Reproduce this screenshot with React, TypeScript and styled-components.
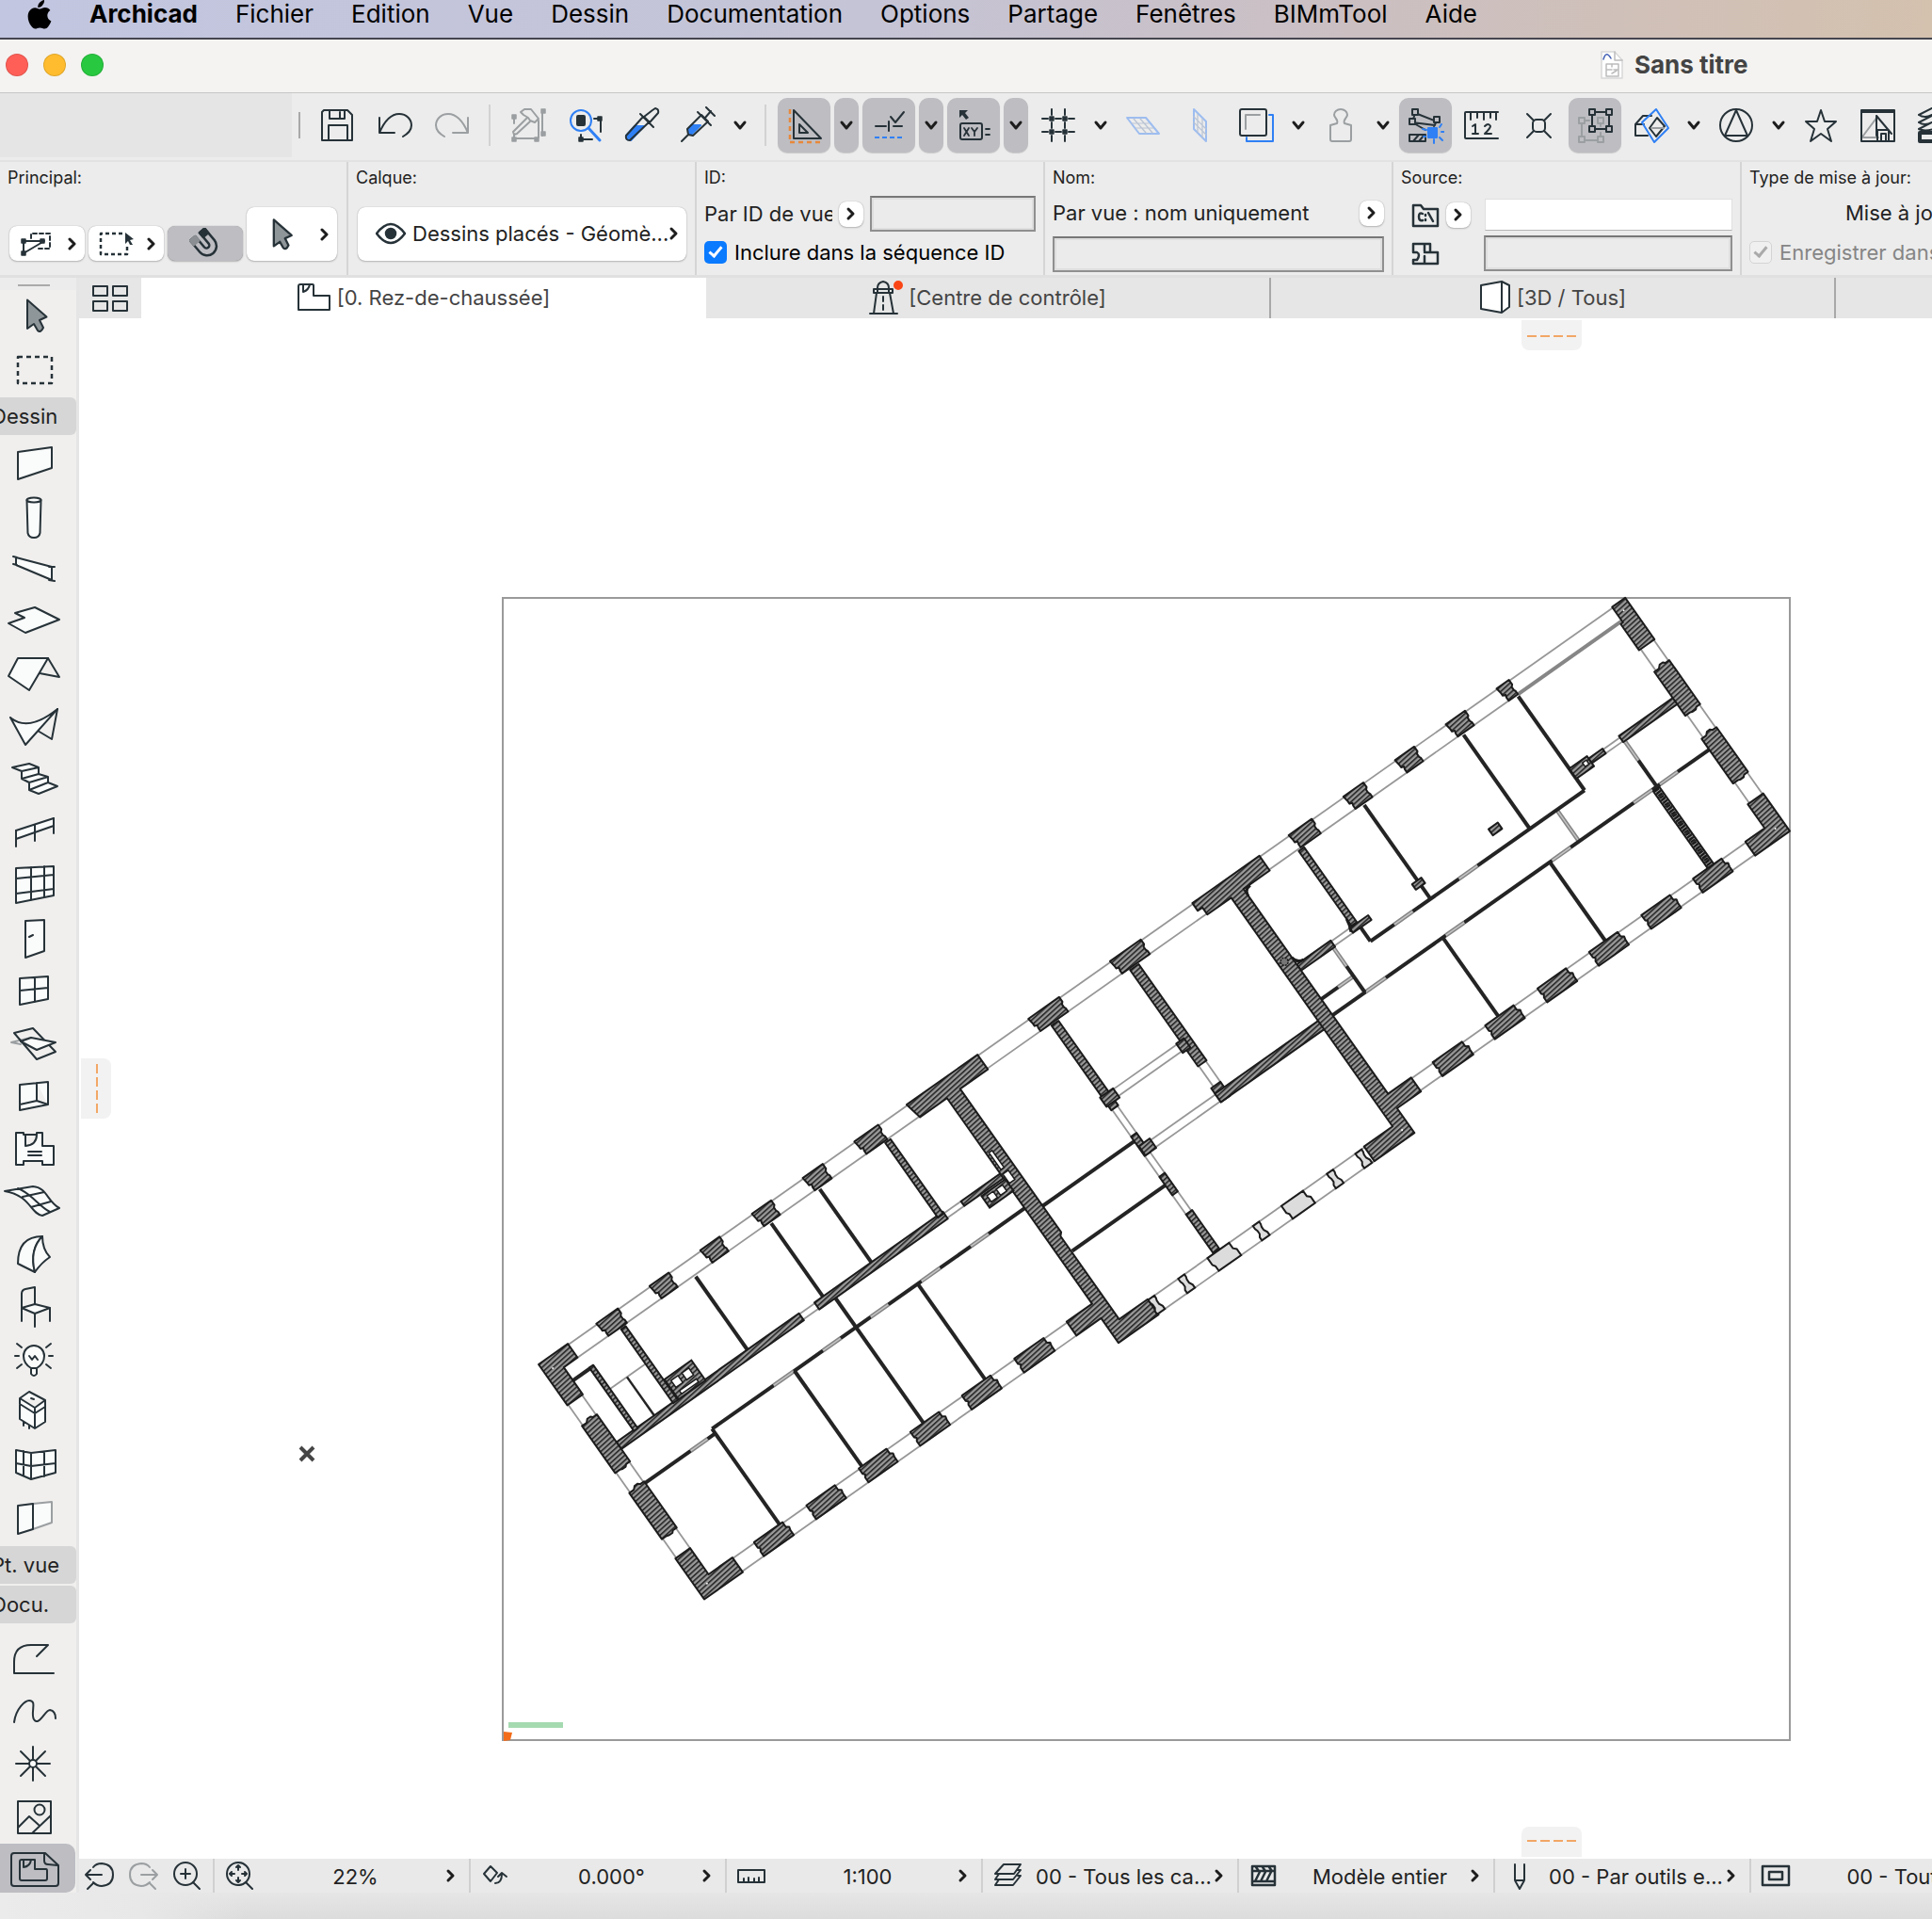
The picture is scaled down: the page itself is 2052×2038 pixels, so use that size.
import React from "react";
import styled, { createGlobalStyle, css } from "styled-components";

const ink = "#263238";
const faint = "#9b9fa1";
const blue = "#2f80f5";
const orange = "#e8883a";

const Global = createGlobalStyle`
  *, *::before, *::after { box-sizing: border-box; }
  body { margin: 0; font-family: Inter, "Liberation Sans", sans-serif; color: #222; background: #ececec; }
  button, input, select { font: inherit; color: inherit; margin: 0; }
  button { border: 0; padding: 0; background: none; }
`;

const Shell = styled.div`
  display: flex;
  flex-direction: column;
  min-height: 100vh;
  overflow: hidden;
`;

/* ---------- system menu ---------- */

const MenuBar = styled.nav`
  display: flex;
  align-items: flex-start;
  gap: 40px;
  height: 42px;
  padding-left: 29px;
  white-space: nowrap;
  background: linear-gradient(90deg, #c2c6e0 0%, #c5c4d6 45%, #cbbfc2 70%, #d4c1ae 100%);
  border-bottom: 2px solid #45454f;
`;

const MenuItem = styled.button<{ $strong?: boolean }>`
  font-size: 26px;
  line-height: 30px;
  color: #000;
  font-weight: ${(p) => (p.$strong ? 700 : 400)};
`;

const TitleBar = styled.header`
  display: flex;
  align-items: center;
  height: 57px;
  padding: 0 0 2px 6px;
  gap: 16px;
  background: #f4f3f1;
  border-bottom: 1px solid #c6c6c6;
`;

const Light = styled.button<{ $color: string }>`
  width: 24px;
  height: 24px;
  flex: none;
  border-radius: 50%;
  background: ${(p) => p.$color};
  border: 1px solid rgba(0, 0, 0, 0.12);
`;

const Title = styled.h1`
  display: flex;
  align-items: center;
  gap: 12px;
  margin: 0 0 0 1574px;
  font-size: 26px;
  line-height: 30px;
  font-weight: 700;
  color: #444;
  white-space: nowrap;
`;

/* ---------- toolbar ---------- */

const Toolbar = styled.div`
  display: flex;
  align-items: center;
  gap: 4px;
  height: 73px;
  padding-bottom: 3px;
  flex: none;
  background: #ececec;
  border-bottom: 2px solid #e2e2e2;
`;

const DockSpace = styled.div`
  width: 310px;
  flex: none;
  align-self: stretch;
  background: #e5e5e5;
`;

const Divider = styled.span<{ $lead?: boolean }>`
  flex: none;
  width: ${(p) => (p.$lead ? 12 : 19)}px;
  height: ${(p) => (p.$lead ? 28 : 44)}px;
  display: flex;
  justify-content: ${(p) => (p.$lead ? "flex-start" : "center")};
  padding-left: ${(p) => (p.$lead ? 3 : 0)}px;
  &::before {
    content: "";
    width: 2px;
    background: ${(p) => (p.$lead ? "#a9a9a9" : "#d2d2d2")};
  }
`;

const ToolButton = styled.button<{ $on?: boolean; $slim?: boolean }>`
  display: flex;
  flex: none;
  align-items: center;
  justify-content: center;
  width: ${(p) => (p.$slim ? 26 : 56)}px;
  height: 58px;
  border-radius: 10px;
  ${(p) =>
    p.$on &&
    css`
      background: #bdbdc2;
      box-shadow: 0 1px 1px rgba(0, 0, 0, 0.15);
    `}
`;

/* ---------- info box ---------- */

const InfoBar = styled.div`
  display: flex;
  height: 123px;
  flex: none;
  background: #ececec;
  border-bottom: 3px solid #e0e0e0;
`;

const Section = styled.section`
  display: flex;
  flex-direction: column;
  flex: none;
  width: 370px;
  padding: 5px 8px 0 8px;
  border-right: 2px solid #d5d5d5;
`;

const Caption = styled.h2`
  margin: 0;
  font-size: 18px;
  line-height: 24px;
  font-weight: 400;
  white-space: nowrap;
`;

const Line = styled.div<{ $top: number; $gap?: number }>`
  display: flex;
  align-items: center;
  gap: ${(p) => p.$gap ?? 5}px;
  margin-top: ${(p) => p.$top}px;
`;

const Methods = styled.div`
  display: flex;
  align-items: flex-end;
  gap: 4px;
  margin-top: 19px;
  padding-left: 2px;
`;

const raised = css`
  background: #fff;
  border-radius: 8px;
  box-shadow: 0 0 1px rgba(0, 0, 0, 0.35), 0 1px 2px rgba(0, 0, 0, 0.22);
`;

const PopButton = styled.button<{ $big?: boolean; $on?: boolean }>`
  ${raised}
  display: flex;
  flex: none;
  align-items: center;
  justify-content: space-between;
  padding: 0 7px 0 ${(p) => (p.$big ? 25 : 11)}px;
  width: ${(p) => (p.$big ? 96 : 80)}px;
  height: ${(p) => (p.$big ? 57 : 37)}px;
  ${(p) =>
    p.$on &&
    css`
      background: #bdbdc2;
      justify-content: center;
      padding: 0;
    `}
`;

const MiniButton = styled.button`
  ${raised}
  display: flex;
  flex: none;
  align-items: center;
  justify-content: center;
  width: 26px;
  height: 27px;
`;

const LayerField = styled.label`
  ${raised}
  display: flex;
  align-items: center;
  gap: 7px;
  height: 57px;
  margin: 19px 1px 0 2px;
  padding: 0 7px 2px 19px;
  font-size: 22px;
  svg { flex: none; }
`;

const LayerSelect = styled.select`
  appearance: none;
  flex: 1;
  min-width: 0;
  border: 0;
  padding: 0;
  margin-right: -10px;
  background: none;
`;

const Value = styled.span`
  flex: 1;
  min-width: 0;
  font-size: 22px;
  line-height: 30px;
  white-space: nowrap;
  overflow: hidden;
`;

const Well = styled.input<{ $w?: number; $plain?: boolean }>`
  ${(p) =>
    p.$w
      ? css`
          width: ${p.$w}px;
          flex: none;
        `
      : css`
          flex: 1;
          min-width: 0;
        `}
  height: 38px;
  font-size: 22px;
  padding: 0 6px;
  border: 2px solid #8f8f8f;
  border-top-color: #777;
  border-radius: 0;
  background: #ebebeb;
  box-shadow: inset 0 0 0 2px #dedede;
  ${(p) =>
    p.$plain &&
    css`
      height: 34px;
      border: 1px solid #e0e0e0;
      border-bottom-color: #b5b5b5;
      background: #fff;
      box-shadow: none;
    `}
`;

const CheckLabel = styled.label<{ $off?: boolean }>`
  display: flex;
  align-items: center;
  gap: 8px;
  font-size: 22px;
  line-height: 38px;
  white-space: nowrap;
  color: ${(p) => (p.$off ? "#858585" : "#000")};
`;

const Check = styled.input`
  appearance: none;
  position: relative;
  flex: none;
  width: 24px;
  height: 24px;
  border-radius: 5px;
  background: #0a7aff;
  &::after {
    content: "";
    position: absolute;
    left: 8px;
    top: 3px;
    width: 8px;
    height: 14px;
    border: solid #fff;
    border-width: 0 3px 3px 0;
    transform: rotate(40deg);
  }
  &:disabled {
    background: #f0f0f0;
    border: 1px solid #d4d4d4;
  }
  &:disabled::after {
    border-color: #aaa;
    left: 7px;
    top: 2px;
  }
`;

const IconSlot = styled.span`
  display: flex;
  flex: none;
  justify-content: flex-end;
  width: 43px;
  padding-right: 2px;
`;

const Spacer = styled.span<{ $w: number }>`
  flex: none;
  width: ${(p) => p.$w}px;
`;

/* ---------- workspace ---------- */

const Body = styled.main`
  display: flex;
  flex: 1;
`;

const Palette = styled.aside`
  display: flex;
  flex-direction: column;
  flex: none;
  width: 84px;
  background: #f0efee;
  border-right: 3px solid #e5e5e5;
  overflow: hidden;
`;

const Grip = styled.div`
  height: 13px;
  padding: 7px 0 0 19px;
  background: #ececec;
  &::before {
    content: "";
    display: block;
    width: 34px;
    height: 2px;
    background: #aaa;
  }
`;

const PaletteTool = styled.button<{ $on?: boolean }>`
  display: flex;
  flex: none;
  align-items: center;
  width: 80px;
  height: ${(p) => (p.$on ? 52 : 56)}px;
  padding-left: 2px;
  ${(p) =>
    p.$on &&
    css`
      background: #bdbdc2;
      border-radius: 0 10px 10px 0;
    `}
`;

const PaletteGroup = styled.button<{ $after?: number }>`
  flex: none;
  height: 40px;
  margin: 2px 0 ${(p) => p.$after ?? 0}px -20px;
  padding-left: 11px;
  text-align: left;
  font-size: 22px;
  line-height: 40px;
  border-radius: 0 6px 6px 0;
  background: #d6d6d6;
`;

const Work = styled.div`
  display: flex;
  flex-direction: column;
  flex: 1;
  min-width: 0;
`;

const Tabs = styled.div`
  display: flex;
  height: 43px;
  background: #e6e6e6;
`;

const TabOverview = styled.button`
  display: flex;
  flex: none;
  align-items: center;
  justify-content: center;
  width: 66px;
`;

const Tab = styled.button<{ $on?: boolean }>`
  display: flex;
  flex: none;
  align-items: center;
  justify-content: center;
  gap: 6px;
  width: 600px;
  padding-bottom: 2px;
  font-size: 22px;
  color: #444;
  background: ${(p) => (p.$on ? "#fff" : "transparent")};
  border-right: ${(p) => (p.$on ? "0" : "2px solid #a8a8a8")};
`;

const Canvas = styled.div`
  position: relative;
  flex: 1;
  background: #fff;
  overflow: hidden;
`;

const Sheet = styled.svg`
  position: absolute;
  inset: 0;
  width: 100%;
  height: 100%;
`;

const Handle = styled.button<{ $side: "top" | "bottom" | "left" }>`
  position: absolute;
  display: flex;
  align-items: center;
  justify-content: center;
  background: #f2f2f2;
  ${(p) =>
    p.$side === "left"
      ? css`
          left: 2px;
          top: 786px;
          width: 32px;
          height: 64px;
          border-radius: 0 8px 8px 0;
        `
      : css`
          left: 1532px;
          ${p.$side}: 2px;
          width: 64px;
          height: 32px;
          border-radius: ${p.$side === "top" ? "0 0 8px 8px" : "8px 8px 0 0"};
        `}
`;

const StatusBar = styled.footer`
  display: flex;
  height: 36px;
  background: #e9e9e9;
`;

const ViewNav = styled.div`
  display: flex;
  align-items: center;
  flex: none;
  width: 142px;
  gap: 10px;
  padding-left: 4px;
`;

const NavButton = styled.button`
  display: flex;
  width: 36px;
`;

const StatusCell = styled.button`
  display: flex;
  align-items: center;
  flex: none;
  width: 272px;
  padding: 0 13px 0 8px;
  border-left: 2px solid #d0d0d0;
`;

const StatusText = styled.span`
  flex: 1;
  min-width: 0;
  padding: 2px 0 0 10px;
  font-size: 22px;
  line-height: 30px;
  white-space: nowrap;
`;

const Base = styled.div`
  height: 28px;
  background: linear-gradient(90deg, #ebebeb 0, #e8e8e8 150px, transparent 260px),
    linear-gradient(180deg, #e6e6e6, #dcdcdc);
`;

/* ---------- icons ---------- */

type IconProps = { w?: number; h?: number; c?: string; sw?: number; children: React.ReactNode };
const Icon = ({ w = 40, h = 40, c = ink, sw = 2, children }: IconProps) => (
  <svg width={w} height={h} viewBox={`0 0 ${w} ${h}`} fill="none" stroke={c} strokeWidth={sw}
    strokeLinecap="round" strokeLinejoin="round" aria-hidden="true">
    {children}
  </svg>
);

const Down = () => (
  <Icon w={16} h={12} sw={3} c="#1d1d1d"><path d="M3 3l5 6 5-6" /></Icon>
);
const Right = () => (
  <Icon w={12} h={16} sw={3} c="#1d1d1d"><path d="M3 3l5 5-5 5" /></Icon>
);

const Node = ({ x, y, c = ink }: { x: number; y: number; c?: string }) => (
  <rect x={x - 2} y={y - 2} width="4" height="4" fill={c} stroke={c} strokeWidth="1.5" />
);
const OpenNode = ({ x, y, c = ink }: { x: number; y: number; c?: string }) => (
  <rect x={x - 3} y={y - 3} width="6" height="6" fill="#bdbdc2" stroke={c} />
);

const Apple = () => (
  <svg width="26" height="32" viewBox="0 0 26 32" fill="#000" aria-hidden="true">
    <path d="M18 0c.3 2.400-.7 4.300-2 5.700-1.300 1.500-3 2.300-4.700 2.200C11 5.800 12 3.900 13.300 2.600 14.600 1.200 16.500.2 18 0zM13.500 9.600c1.300 0 2.900-1.600 5.500-1.500 2.200.1 4.200 1.100 5.400 3-4.600 2.900-3.900 9.400 1 11.300-.8 2.200-1.800 4.100-3.200 5.900-1.100 1.500-2.300 2.200-3.800 2.200-1.800 0-2.600-1.100-5-1.100s-3.300 1.100-5 1.100c-1.600 0-2.800-.9-3.900-2.400C.3 22.600-.7 15.200 2.600 11.200 4.100 9.200 6.100 8.200 8 8.200c2.400 0 4 1.400 5.500 1.400z" />
  </svg>
);

const icons: Record<string, React.ReactNode> = {
  save: <Icon><path d="M6 4h25l5 5v27H4V6zM12 4v9h16V4M23 6v6M11 36V20h20v16" /></Icon>,
  undo: <Icon><path d="M5 12v16h16M5 28C11 14 18 8 26 8c8 0 13 6 13 12 0 6-4 9-9 12" /></Icon>,
  redo: <Icon c={faint}><path d="M39 12v16H23M39 28C33 14 26 8 18 8 10 8 5 14 5 20c0 6 4 9 9 12" /></Icon>,
  hammer: (
    <Icon c={faint}>
      <path d="M12 6l4-3h7l8 10-4 4-5-2-2-3-5-3zM19 12L4 27l1 3 3-1 14-13" />
      <path d="M5 11v7M5 30v4h25M35 6v25M31 15v18" />
      <Node x={5} y={11} c={faint} /><Node x={36} y={5} c={faint} /><Node x={36} y={29} c={faint} />
      <Node x={5} y={35} c={faint} /><Node x={29} y={35} c={faint} />
    </Icon>
  ),
  find: (
    <Icon>
      <circle cx="16" cy="15" r="11" stroke={blue} /><path d="M24 23l12 13" stroke={blue} strokeWidth="3" />
      <rect x="12" y="10" width="8" height="10" rx="1" fill={ink} />
      <path d="M30 13h7v14M16 30v5h12" /><Node x={36} y={13} /><Node x={16} y={35} />
    </Icon>
  ),
  dropper: (
    <Icon>
      <path d="M5 35l-1-4 9-10h10L9 36z" fill={blue} stroke={blue} />
      <path d="M22 11L4 31q-1 5 4 5l20-19M19 8l14 14M32 4l3-2q4 1 3 5l-9 10-6-6z" />
    </Icon>
  ),
  syringe: (
    <Icon>
      <path d="M10 27l3-7h10L13 30z" fill={blue} stroke={blue} />
      <path d="M3 37l7-7M10 30l-1-6L24 9l7 7-16 15zM20 6l14 14M28 12l6-7M29 1l9 9" />
    </Icon>
  ),
  setsquare: (
    <Icon>
      <path d="M9 4v30h29zM15 19v9h9z" /><path d="M5 3v34M5 38h32" stroke={orange} strokeWidth="2.500" strokeDasharray="5 4" strokeLinecap="butt" />
    </Icon>
  ),
  guide: (
    <Icon>
      <path d="M6 21h11M20 16v10M25 21h9M22 11l5 6L36 6" /><path d="M5 33h32" stroke={blue} strokeDasharray="5 3" strokeLinecap="butt" />
    </Icon>
  ),
  tracker: (
    <Icon>
      <path d="M5 4h9l-3 3 4 5-3 2-4-5-3 3z" fill={ink} stroke="none" />
      <rect x="6" y="18" width="23" height="17" rx="2" /><path d="M33 24h4M33 30h4M10 23l5 8M15 23l-5 8M18 23l3 4 3-4M21 27v4" strokeWidth="1.800" />
    </Icon>
  ),
  grid: (
    <Icon>
      <path d="M3 13h6M17 13h6M31 13h6M3 27h6M17 27h6M31 27h6M13 3v6M13 17v6M13 31v6M27 3v6M27 17v6M27 31v6" />
      {[13, 27].map((x) => [13, 27].map((y) => <Node key={`${x}-${y}`} x={x} y={y} />))}
    </Icon>
  ),
  plane: (
    <Icon c="#9dbdf0"><path d="M3 12h20l14 17H16z" /><path d="M10 13l13 15M17 13l13 15M8 18h18M12 23h19" stroke="#b9c3d3" strokeWidth="1.200" /></Icon>
  ),
  elevation: (
    <Icon c="#9dbdf0"><path d="M14 3l13 13v21L14 24z" /><path d="M18 8v20M23 13v20M14 11l13 13M14 17l13 13" stroke="#b9c3d3" strokeWidth="1.200" /></Icon>
  ),
  trace: (
    <Icon><path d="M34 9h4v28H10v-4" stroke={blue} /><rect x="3" y="3" width="28" height="28" rx="2" /><path d="M9 24V9h15" stroke={faint} /></Icon>
  ),
  weight: (
    <Icon c={faint}><path d="M16 18c2-4-3-6-3-9a7 6 0 0 1 14 0c0 3-5 5-3 9M16 18l-7 2v15q0 2 2 2h18q2 0 2-2V20l-7-2" /></Icon>
  ),
  magic: (
    <Icon>
      <path d="M9 7l23 9M9 7L6 17l14 8M32 16l-3 5M6 17l24 3" /><OpenNode x={9} y={6} /><OpenNode x={6} y={16} /><OpenNode x={32} y={14} />
      <path d="M3 30h17v7H3zM7 37l6-7M13 37l6-7" /><rect x="23" y="23" width="9" height="10" fill={blue} stroke={blue} />
      <path d="M17 24l4 1M35 22l2-3M37 27h3M35 33l3 3M29 35v4M18 32h2" stroke={blue} />
    </Icon>
  ),
  ruler: (
    <Icon>
      <path d="M37 6H3q-1 0-1 1v26q0 1 1 1h34M8 7v7M15 7v5M22 7v7M29 7v5M35 7v7" />
      <path d="M10 21l3-2v10M10 29h6M23 21q4-4 6 0 0 2-6 8h7" />
    </Icon>
  ),
  suspend: <Icon><rect x="14" y="14" width="13" height="13" rx="4" /><path d="M8 8l7 7M33 8l-7 7M8 33l7-7M33 33l-7-7" /></Icon>,
  group: (
    <Icon>
      <path d="M6 15v21h20M6 15h8M26 36v-8M26 13v8" stroke={faint} />
      <OpenNode x={6} y={15} c={faint} /><OpenNode x={6} y={35} c={faint} /><OpenNode x={26} y={35} c={faint} /><OpenNode x={26} y={15} c={faint} />
      <path d="M17 6h18v18H17z" /><OpenNode x={17} y={6} /><OpenNode x={35} y={6} /><OpenNode x={17} y={24} /><OpenNode x={35} y={24} />
    </Icon>
  ),
  cut3d: (
    <Icon>
      <path d="M3 19l8-9h9M3 19v12h13M3 19h9M26 12l8 9-9 11-7-9z" />
      <path d="M10 17L25 3l13 20-15 15z" stroke={blue} /><path d="M21 23h12" stroke={faint} />
    </Icon>
  ),
  north: <Icon><circle cx="20" cy="20" r="17" /><path d="M20 4L8 31h24z" /></Icon>,
  star: <Icon><path d="M20 4l4 12h12l-9 8 4 13-11-8-11 8 4-13-9-8h12z" /></Icon>,
  house: (
    <Icon><path d="M3 4h35v33H3zM3 6h35" /><path d="M20 11L5 31v2h16" stroke={faint} /><path d="M19 10v21M19 10l16 19M20 37V25h12v12M24 37v-8h5v8" /></Icon>
  ),
  stack: <Icon><path d="M4 9l14-7h20M4 9q6 4 14 0M4 17l14-7M4 17q6 4 14 0M4 24l14-7M4 24q6 3 16 0" /><rect x="5" y="28" width="20" height="9" strokeWidth="4" /></Icon>,
};

const Pal = ({ children }: { children: React.ReactNode }) => (
  <svg width="70" height="52" viewBox="2 2 70 52" fill="#fafbfb" stroke={ink} strokeWidth="2"
    strokeLinecap="round" strokeLinejoin="round" aria-hidden="true">
    {children}
  </svg>
);

type Tool = [string, React.ReactNode];
const arrowShape = "M29 10.500L49.500 28.500 42 32l4 8q-3 6-6 3l-4-7-7 5z";

const selectTools: Tool[] = [
  ["Flèche", <path key="a" d={arrowShape} fill="#8f9699" />],
  ["Zone de sélection", <rect key="a" x="19" y="15" width="36" height="28" fill="none" strokeDasharray="5 4" strokeLinecap="butt" strokeWidth="2.500" />],
];

const designTools: Tool[] = [
  ["Mur", <path key="a" d="M19 16l36-5v22L19 45z" />],
  ["Poteau", <g key="a"><path d="M28.500 11L29.500 46q1 5 6.500 5t6.500-5l1-35z" /><ellipse cx="36" cy="11" rx="7.500" ry="2.500" /></g>],
  ["Poutre", <path key="a" d="M17 16l38 10v14L17 24zM14 15l4 1M14 23l4 1M52 26l6 0M52 40l6 1" />],
  ["Dalle", <path key="a" d="M9 30l17-6-10-5 21-6 26 13-36 14z" />],
  ["Toit", <g key="a"><path d="M51 11l12 20-21-4" fill="none" /><path d="M19 11h32L31 45 9 30z" /></g>],
  ["Coque", <g key="a"><path d="M61 9l-6 32-15-9" fill="none" /><path d="M11 18Q30 34 61 9L27 47z" /></g>],
  ["Escalier", <path key="a" d="M13 15l18-4 10 4-18 4zM23 19v8l18-5v-7M23 27l18-5 10 3-20 6zM31 31v8l20-8v-6M31 39l20-8 10 4-20 8z" />],
  ["Garde-corps", <g key="a"><path d="M17 26l40-13v8L17 35z" /><path d="M17 26v17M37 20v17M57 13v16" fill="none" /></g>],
  ["Mur-rideau", <path key="a" d="M17 10l40-2v31L17 47zM33 9v35M47 8v33M17 21l40-4M17 37l40-5" />],
  ["Porte", <path key="a" d="M27 10l20-1v33L27 49zM31 27l4-2" />],
  ["Fenêtre", <path key="a" d="M21 15l30-2v24L21 43zM37 14v26M21 28l30-3" />],
  ["Fenêtre de toit", <g key="a"><path d="M33 22L12 27l10 2" stroke={faint} /><path d="M15 17l20-5 24 25-20 8z" fill="none" /><path d="M22 26l11-4 26 5-20 8z" /></g>],
  ["Fenêtre d'angle", <path key="a" d="M21 16l30-3v24L21 43zM39 14v19l12 4M39 33L21 37" />],
  ["Zone", <path key="a" d="M17 11h8v2h14v-2h6v14h12v20H45v-4H25v4h-8zM27 13v12q12-1 12-12M30 31h14M30 35h14" />],
  ["Maillage", <path key="a" d="M5 17l30-5C50 13 50 28 63 35L45 43C32 41 33 22 5 17zM19 14C34 20 40 32 53 39M24 23l23-5M33 34l21-6" />],
  ["Forme", <g key="a"><path d="M45 9Q19 9 19 38l18 9Q31 23 45 9z" /><path d="M45 9q0 14 8 22-9 6-16 16Q31 23 45 9z" /></g>],
  ["Objet", <g key="a"><path d="M23 43V14q0-4 4-5l10-2v18M53 29v14M37 35v14" fill="none" /><path d="M23 29l14-4 16 4-16 6z" /></g>],
  ["Lampe", <g key="a"><path d="M33 37q-8-5-8-13a11 11 0 0 1 22 0q0 8-8 13zM33 37v6q3 4 6 0v-6M31 24l3 4 3-4 3 4" /><path d="M18 11l5 4M54 11l-5 4M16 24h4M52 24h4M18 37l5-4M54 37l-5-4" fill="none" /></g>],
  ["Équipement", <path key="a" d="M31 6l17 9-11 8-16-10zM21 13v22l16 10 11-7V15M37 23v22M21 19l16 10 11-7M25 38v4M31 42v3M33 13l3 1" />],
  ["Mur-rideau d'angle", <path key="a" d="M17 12l16 3 26-3v24l-26 7-16-7zM33 15v28M25 13v26M47 14v26M17 26l16 3 26-3" />],
  ["Ouverture", <g key="a"><path d="M35 13l20-2v22l-20 7" stroke={faint} /><path d="M19 15l16-2v27l-16 5z" /></g>],
];

const docTools: Tool[] = [
  ["Polyligne", <path key="a" d="M57 43H15V31q0-18 18-18h18L39 25" fill="none" />],
  ["Spline", <path key="a" d="M15 39C17 24 27 16 31 16c9 0 1 13 5 20 5 8 12-10 17-10q6 1 6 9" fill="none" />],
  ["Point chaud", <g key="a"><path d="M35 9v36M17 27h36M22 14l26 26M48 14L22 40" fill="none" /><circle cx="35" cy="27" r="4" /></g>],
  ["Figure", <g key="a" fill="none"><rect x="19" y="11" width="35" height="34" /><circle cx="42" cy="20" r="5.500" /><path d="M19 39l12-12 10 9M34 45l20-19" /></g>],
];

const drawingTool = (
  <g fill="none" transform="translate(0 2)">
    <path d="M15 10h33l14 13v19q0 3-3 3H15q-3 0-3-3V13q0-3 3-3zM47 10v8q0 4 4 4l10 1" />
    <path d="M23 17h14v10h12q1 0 1 2v8q0 2-2 2H23q-2 0-2-2V19q0-2 2-2zM25 17v8q7-1 8-8" />
  </g>
);

/* ---------- floor plan ---------- */

/* The plan is described along its own axes: u follows the façade, v goes inwards. */
type Span = [number, number];
const northPiers: Span[] = [
  [75, 103], [144, 169], [210, 235], [277, 302], [343, 369], [410, 441], [636, 676], [742, 782],
  [974, 1004], [1045, 1071], [1112, 1137], [1178, 1203], [1244, 1260],
];
const southWestPiers: Span[] = [[78, 117], [146, 185], [214, 252], [281, 320], [348, 387], [416, 456]];
const southEastPiers: Span[] = [[960, 1000], [1028, 1067], [1096, 1135], [1163, 1202], [1231, 1270], [1298, 1337]];
const gableWest: Span[] = [[80, 140], [167, 226]];
const gableEast: Span[] = [[82, 138], [169, 226]];

/* x, y, width, height of plain masonry */
const masonry: number[][] = [
  [20, 115, 237, 9], [277, 115, 167, 9], [466, 117, 51, 6],
  [93, 20, 6, 96], [436, 20, 7, 97], [42, 34, 5, 82],
  [652, 20, 9, 110], [650, 112, 17, 12], [653, 165, 7, 25], [654, 178, 14, 12], [653, 217, 7, 24], [653, 266, 8, 50],
  [754, 20, 11, 125], [749, 112, 10, 12], [752, 172, 12, 18], [752, 179, 135, 11],
  [902, 117, 44, 8], [973, 20, 7, 97], [970, 118, 24, 6],
  [1051, 118, 12, 7], [1151, 117, 12, 8],
  [1321, 116, 71, 8], [1258, 114, 23, 13], [1281, 117, 18, 6],
  [1317, 185, 8, 101],
];

/* x1, y1, x2, y2 of thin partitions */
const partitions: number[][] = [
  [20, 168, 79, 168], [101, 168, 110, 168], [111, 162, 191, 162], [217, 162, 255, 162], [278, 162, 317, 162],
  [340, 162, 383, 162], [407, 162, 447, 162], [470, 162, 517, 162],
  [111, 162, 111, 287], [218, 162, 218, 287], [298, 124, 298, 287], [378, 162, 378, 287],
  [190, 20, 190, 116], [288, 20, 288, 116], [351, 20, 351, 116], [20, 35, 44, 35],
  [534, 171, 655, 171], [532, 228, 655, 228],
  [980, 142, 1011, 142], [1035, 142, 1095, 142], [1119, 142, 1258, 142], [980, 124, 980, 142],
  [1258, 20, 1258, 142], [1187, 20, 1187, 142], [1058, 20, 1058, 142],
  [944, 149, 944, 183], [902, 162, 924, 162],
  [902, 183, 945, 183], [971, 183, 1049, 183], [1073, 183, 1187, 183], [1211, 183, 1293, 183], [1350, 183, 1391, 183],
  [1317, 183, 1327, 183], [1323, 149, 1323, 183], [1045, 183, 1045, 286], [1184, 183, 1184, 286],
];

/* x1, y1, x2, y2 of door leaves inside the partitions */
const doors: number[][] = [
  [79, 168, 101, 168], [191, 162, 217, 162], [255, 162, 278, 162], [317, 162, 340, 162], [383, 162, 407, 162], [447, 162, 470, 162],
  [924, 162, 943, 162], [944, 125, 944, 149],
  [1011, 142, 1035, 142], [1095, 142, 1119, 142], [945, 183, 971, 183], [1049, 183, 1073, 183], [1187, 183, 1211, 183],
  [1293, 183, 1317, 183], [1327, 183, 1350, 183], [1222, 143, 1222, 183], [1323, 125, 1323, 149],
];

/* x1, y1, x2, y2 of openings and beams */
const openings: number[][] = [
  [38, 1, 478, 1], [566, 1, 849, 1], [936, 1, 1395, 1],
  [38, 18, 484, 18], [566, 18, 857, 18], [934, 18, 1260, 18],
  [1, 50, 1, 252], [19, 50, 19, 252], [48, 287, 484, 287], [48, 304, 484, 304],
  [931, 286, 1366, 286], [931, 302, 1366, 302], [1393, 50, 1393, 255], [1410, 50, 1410, 255],
  [568, 317, 850, 317], [568, 335, 850, 335],
  [257, 116, 277, 116], [257, 123, 277, 123], [443, 117, 466, 117], [443, 123, 466, 123],
  [47, 65, 93, 65], [663, 113, 753, 113], [663, 122, 753, 122], [668, 180, 753, 180], [668, 189, 753, 189],
  [653, 130, 653, 266], [660, 130, 660, 266], [755, 145, 755, 173], [764, 145, 764, 173],
  [946, 118, 970, 118], [946, 124, 970, 124], [1299, 118, 1321, 118], [1299, 123, 1321, 123],
];

const Segments = ({ items }: { items: number[][] }) => (
  <>{items.map(([a, b, c, d], i) => <path key={i} d={`M${a} ${b}L${c} ${d}`} />)}</>
);

const FloorPlan = () => (
  <g transform="translate(572 1449) rotate(-35.200) scale(1.001)">
    <g stroke="#979797" strokeWidth="1.800" fill="none"><Segments items={openings} /></g>
    <g stroke="#858585" strokeWidth="4.500"><Segments items={doors} /></g>
    <g stroke="#c4c4c4" strokeWidth="1.500"><Segments items={doors} /></g>
    <path d="M1259 18H1394" stroke="#868686" strokeWidth="4" />
    <g stroke="#242424" strokeWidth="4"><Segments items={partitions} /></g>
    <path d="M69 65V116" stroke="#242424" strokeWidth="2.500" />
    <g fill="url(#hatch)" stroke="#1c1c1c" strokeWidth="2" strokeLinejoin="round">
      {masonry.map(([x, y, w, h], i) => <rect key={i} x={x} y={y} width={w} height={h} />)}
      {northPiers.map(([a, b]) => (
        <path key={a} d={`M${a} 0H${b}v6l-2 2v4l1 2v4H${a + 3}v-4l1-3-3-1V7z`} />
      ))}
      {southWestPiers.map(([a, b]) => (
        <path key={a} d={`M${a} 286H${b - 2}v6l3 2-1 4v6H${a}v-6l2-3-2-2z`} />
      ))}
      {southEastPiers.map(([a, b]) => (
        <path key={a} d={`M${a} 285H${b - 2}v6l3 2-1 4v6H${a}v-6l2-3-2-2z`} />
      ))}
      {gableWest.map(([a, b]) => (
        <path key={a} d={`M0 ${a}h6l3-3h4l2 2h5V${b}h-5l-2 2H9l-3-1H0z`} />
      ))}
      {gableEast.map(([a, b]) => (
        <path key={a} d={`M1391 ${a}h6l3-3h4l2 2h5V${b}h-5l-2 2h-4l-3-1h-6z`} />
      ))}
      <path d="M0 0H38V18H20V53H0z" />
      <path d="M0 252H19V286H50V305H0z" />
      <path d="M1394 0H1411V54H1391V20h3z" />
      <path d="M1391 254H1411V303H1366V285H1391z" />
      <path d="M478 0H570V19H534V205L531 208V316H568V336H516V304H484V286H517V19H482z" />
      <path d="M849 0H936V19H902V285H932V303H901V335H849V316H886V19H855V10H849z" />
    </g>
    <path d="M1321 185V286" stroke="#1a1a1a" strokeWidth="5" strokeDasharray="2 1" />
    <path d="M902 28q0-8 8-8M902 108q1 8 9 9M973 108q-1 8-4 14" stroke="#1c1c1c" strokeWidth="3" fill="none" />
    <g fill="#dcdcdc" stroke="#1c1c1c" strokeWidth="2">
      <path d="M645 317h28v7l3 3v8h-29v-6l-2-3zM741 317h28v7l3 3v8h-29v-6l-2-3z" />
      {[572, 611, 708, 804, 841].map((u) => (
        <path key={u} d={`M${u - 4} 317h8v3l-1 3v4l2 4v4h-10v-4l2-3v-4l-1-3z`} />
      ))}
    </g>
    <g fill="url(#hatch)" stroke="#1c1c1c" strokeWidth="2">
      <rect x="100" y="90" width="35" height="26" />
      <rect x="487" y="125" width="31" height="15" />
    </g>
    <g fill="#fff" stroke="#1c1c1c" strokeWidth="1.500">
      <path d="M105 95h9v9h-9zM119 95h9v9h-9zM106 109h22v4h-22zM492 128h8v8h-8zM504 128h8v8h-8zM520 92h4v22h-4zM519 119h7v12h-7z" />
      <path d="M1273 117h5v5h-5z" /><circle cx="893" cy="107" r="4" strokeDasharray="2 1" fill="#777" />
    </g>
    <g fill="#fff">
      <circle cx="10" cy="12" r="1" /><circle cx="12" cy="293" r="1" /><circle cx="1402" cy="10" r="1" /><circle cx="1400" cy="292" r="1" /><circle cx="892" cy="325" r="1" />
    </g>
  </g>
);

const Drawing = () => (
  <Sheet role="img" aria-label="Plan du rez-de-chaussée">
    <defs>
      <pattern id="hatch" width="6" height="4" patternUnits="userSpaceOnUse" patternTransform="rotate(-7)">
        <rect width="6" height="4" fill="#9a9a9a" />
        <rect width="6" height="1.800" fill="#303030" />
      </pattern>
    </defs>
    <g transform="translate(-84 -338)">
      <rect x="534" y="635" width="1367" height="1213" fill="none" stroke="#9a9a9a" strokeWidth="2" />
      <FloorPlan />
      <path d="M540 1829h58v6h-58z" fill="#a5dab0" />
      <path d="M535 1839l9 1-2 8-7 1z" fill="#f36c1a" />
      <path d="M319 1537l14 14M333 1537l-14 14" stroke="#454545" strokeWidth="4" />
    </g>
  </Sheet>
);

/* ---------- screen ---------- */

const menus = ["Fichier", "Edition", "Vue", "Dessin", "Documentation", "Options", "Partage", "Fenêtres", "BIMmTool", "Aide"];

type Bar = { id: string; label: string; on?: boolean; menu?: boolean };
const fileTools: Bar[] = [
  { id: "save", label: "Enregistrer" }, { id: "undo", label: "Annuler" }, { id: "redo", label: "Rétablir" },
];
const editTools: Bar[] = [
  { id: "hammer", label: "Modifier" }, { id: "find", label: "Rechercher" }, { id: "dropper", label: "Prélever" },
  { id: "syringe", label: "Injecter", menu: true },
];
const viewTools: Bar[] = [
  { id: "setsquare", label: "Lignes guides", on: true, menu: true },
  { id: "guide", label: "Guides d'accrochage", on: true, menu: true },
  { id: "tracker", label: "Coordonnées", on: true, menu: true },
  { id: "grid", label: "Grille", menu: true },
  { id: "plane", label: "Plan d'édition" }, { id: "elevation", label: "Plan vertical" },
  { id: "trace", label: "Trace", menu: true }, { id: "weight", label: "Gravité", menu: true },
  { id: "magic", label: "Baguette magique", on: true }, { id: "ruler", label: "Mesure" },
  { id: "suspend", label: "Intersection" }, { id: "group", label: "Suspendre groupes", on: true },
  { id: "cut3d", label: "Coupe 3D", menu: true }, { id: "north", label: "Orientation", menu: true },
  { id: "star", label: "Favoris" }, { id: "house", label: "Projet" }, { id: "stack", label: "Étages" },
];

const ToolRun = ({ items }: { items: Bar[] }) => (
  <>
    {items.map((t) => (
      <React.Fragment key={t.id}>
        <ToolButton $on={t.on} aria-label={t.label}>{icons[t.id]}</ToolButton>
        {t.menu && <ToolButton $slim $on={t.on} aria-label={`${t.label} : options`}><Down /></ToolButton>}
      </React.Fragment>
    ))}
  </>
);

const ToolColumn = ({ tools }: { tools: Tool[] }) => (
  <>
    {tools.map(([label, art]) => (
      <PaletteTool key={label} aria-label={label}><Pal>{art}</Pal></PaletteTool>
    ))}
  </>
);

const status: { label: string; art: React.ReactNode; text: string }[] = [
  { label: "Zoom", text: "22%", art: <Icon w={36} h={36}><circle cx="17" cy="16" r="12" /><path d="M25 25l7 7M17 8v4M17 20v4M9 16h4M21 16h4M15 9l2-2 2 2M15 23l2 2 2-2M10 14l-2 2 2 2M24 14l2 2-2 2" /></Icon> },
  { label: "Orientation", text: "0.000°", art: <Icon w={36} h={36}><path d="M13 8l7 7-7 9-7-8zM18 26q7 0 7-10M21 19l4-4 5 4" /></Icon> },
  { label: "Échelle", text: "1:100", art: <Icon w={36} h={36}><path d="M4 12h28v13H4zM10 25v-4M15 25v-5M21 25v-4M26 25v-5" /></Icon> },
  { label: "Calques", text: "00 - Tous les ca...", art: <Icon w={36} h={36}><path d="M14 6h18l-7 10H5zM9 16l-4 6h19l8-10h-3M9 22l-4 6h19l8-10h-3" /></Icon> },
  { label: "Structure", text: "Modèle entier", art: <Icon w={36} h={36} sw={2.5}><path d="M6 8h24v20H6zM6 13h24M6 24h24M9 24l5-10M15 24l5-10M21 24l5-10M10 9l3 4M17 9l3 4M24 9l3 4" /></Icon> },
  { label: "Stylos", text: "00 - Par outils e...", art: <Icon w={36} h={36}><path d="M13 6v17l10 0V6M13 23l5 9 5-9" /></Icon> },
  { label: "Options de vue", text: "00 - Tout", art: <Icon w={36} h={36} sw={2.5}><path d="M4 8h28v20H4zM11 14h14v8H11z" /></Icon> },
];

export default function App() {
  return (
    <Shell>
      <Global />
      <MenuBar>
        <MenuItem aria-label="Pomme"><Apple /></MenuItem>
        <MenuItem $strong>Archicad</MenuItem>
        {menus.map((m) => <MenuItem key={m}>{m}</MenuItem>)}
      </MenuBar>

      <TitleBar>
        <Light $color="#ff5f57" aria-label="Fermer" />
        <Light $color="#febc2e" aria-label="Réduire" />
        <Light $color="#28c840" aria-label="Agrandir" />
        <Title>
          <Icon w={24} h={30} c="#bcbcbc" sw={1.5}>
            <path d="M1 1h14l8 9v19H1z" fill="#fff" stroke="#d8d8d8" /><path d="M15 1v9h8" />
            <path d="M6 14h13v13H6zM6 20h6M14 20h5M12 14v3M12 24l5-3" /><path d="M3 9q3-10 8-1" stroke="#4763b5" />
          </Icon>
          Sans titre
        </Title>
      </TitleBar>

      <Toolbar>
        <DockSpace />
        <Divider $lead />
        <ToolRun items={fileTools} />
        <Divider />
        <ToolRun items={editTools} />
        <Divider />
        <ToolRun items={viewTools} />
      </Toolbar>

      <InfoBar>
        <Section>
          <Caption>Principal:</Caption>
          <Methods>
            <PopButton aria-label="Méthode de sélection">
              <Icon w={34} h={28}><path d="M12 8V3h20v16H20" strokeDasharray="4 3" /><path d="M4 11h22L4 24zM4 11v13" /><Node x={4} y={11} /><Node x={4} y={24} /><Node x={24} y={11} /></Icon>
              <Right />
            </PopButton>
            <PopButton aria-label="Sélection rapide">
              <Icon w={38} h={28}><path d="M25 3H2v22h28v-8" strokeDasharray="4 3" strokeWidth="2.500" strokeLinecap="butt" /><path d="M28 2l9 7-4 1 3 5-3 0-2-4-3 3z" fill={ink} stroke="none" /></Icon>
              <Right />
            </PopButton>
            <PopButton $on aria-label="Aimant">
              <Icon w={34} h={34} sw={2.5}>
                <g transform="rotate(-40 17 17)">
                  <path d="M7 4h7v15a3 3 0 0 0 6 0V4h7v16a10 10 0 0 1-20 0z" />
                  <path d="M20 4h7v6h-7z" fill={ink} /><path d="M7 4h7v6H7z" fill="#8b8f93" stroke="#8b8f93" />
                </g>
              </Icon>
            </PopButton>
            <PopButton $big aria-label="Outil flèche">
              <svg width="26" height="34" viewBox="27 9 24 37" fill="#8f9699" stroke={ink} strokeWidth="2.500" strokeLinejoin="round"><path d={arrowShape} /></svg>
              <Right />
            </PopButton>
          </Methods>
        </Section>

        <Section>
          <Caption>Calque:</Caption>
          <LayerField>
            <Icon w={32} h={26} sw={2.5}><path d="M1 13Q16-7 31 13 16 33 1 13z" /><circle cx="16" cy="13" r="5" fill={ink} /></Icon>
            <LayerSelect aria-label="Calque"><option>Dessins placés - Géomè...</option></LayerSelect>
            <Right />
          </LayerField>
        </Section>

        <Section>
          <Caption>ID:</Caption>
          <Line $top={7} $gap={7}>
            <Value>Par ID de vue</Value>
            <MiniButton aria-label="Choisir l'ID"><Right /></MiniButton>
            <Well $w={176} aria-label="ID" />
          </Line>
          <Line $top={3}>
            <CheckLabel><Check type="checkbox" defaultChecked />Inclure dans la séquence ID</CheckLabel>
          </Line>
        </Section>

        <Section>
          <Caption>Nom:</Caption>
          <Line $top={10}>
            <Value>Par vue : nom uniquement</Value>
            <MiniButton aria-label="Choisir le nom"><Right /></MiniButton>
          </Line>
          <Line $top={10}>
            <Well aria-label="Nom" />
          </Line>
        </Section>

        <Section>
          <Caption>Source:</Caption>
          <Line $top={10}>
            <IconSlot>
              <Icon w={30} h={28} sw={2.5}><path d="M2 24V4h8l3 4h15v18H2zM12 13q-4-2-4 3t4 4M15 14v1M15 19v1M18 12l5 9" /></Icon>
            </IconSlot>
            <MiniButton aria-label="Choisir la source"><Right /></MiniButton>
            <Spacer $w={5} />
            <Well $plain aria-label="Fichier source" />
          </Line>
          <Line $top={5}>
            <IconSlot>
              <Icon w={30} h={26} sw={2.5}><path d="M2 3h18v9h8v12H2v-4M2 12V3M2 12h4q4 2 0 8H2M14 3v8M14 16v8M14 12h6" /></Icon>
            </IconSlot>
            <Spacer $w={35} />
            <Well aria-label="Vue source" />
          </Line>
        </Section>

        <Section>
          <Caption>Type de mise à jour:</Caption>
          <Line $top={10}>
            <Spacer $w={97} />
            <Value>Mise à jour auto</Value>
          </Line>
          <Line $top={8}>
            <CheckLabel $off><Check type="checkbox" defaultChecked disabled />Enregistrer dans le projet</CheckLabel>
          </Line>
        </Section>
      </InfoBar>

      <Body>
        <Palette>
          <Grip />
          <ToolColumn tools={selectTools} />
          <PaletteGroup $after={2}>Dessin</PaletteGroup>
          <ToolColumn tools={designTools} />
          <PaletteGroup>Pt. vue</PaletteGroup>
          <PaletteGroup $after={10}>Docu.</PaletteGroup>
          <ToolColumn tools={docTools} />
          <PaletteTool $on aria-label="Dessin placé"><Pal>{drawingTool}</Pal></PaletteTool>
        </Palette>

        <Work>
          <Tabs>
            <TabOverview aria-label="Vue d'ensemble">
              <Icon w={40} h={30}><path d="M2 2h15v10H2zM23 2h15v10H23zM2 18h15v10H2zM23 18h15v10H23z" /></Icon>
            </TabOverview>
            <Tab $on>
              <Icon w={36} h={32}><path d="M3 2h13q1 0 1 1v11h17v15H1V4q0-2 2-2zM6 2v8q6-2 7-8" /></Icon>
              [0. Rez-de-chaussée]
            </Tab>
            <Tab>
              <Icon w={36} h={38}>
                <path d="M9 13V9q0-6 6-7 6 1 6 7v4M5 10h20v4H5zM8 14L5 36M22 14l4 22M1 36h29M15 18v5M15 27v5" />
                <circle cx="31" cy="6" r="4" fill="#fa4616" stroke="#fa4616" />
              </Icon>
              [Centre de contrôle]
            </Tab>
            <Tab>
              <Icon w={34} h={36}><path d="M2 5l22-4 8 4v23l-8 6-22-4zM24 1v33" fill="#fff" /></Icon>
              [3D / Tous]
            </Tab>
          </Tabs>

          <Canvas>
            <Drawing />
            <Handle $side="top" aria-label="Guide supérieur">
              <Icon w={56} h={4} c="#f2a766"><path d="M2 3h52" strokeDasharray="10 4" strokeLinecap="butt" /></Icon>
            </Handle>
            <Handle $side="left" aria-label="Guide gauche">
              <Icon w={4} h={56} c="#f2a766"><path d="M3 2v52" strokeDasharray="10 4" strokeLinecap="butt" /></Icon>
            </Handle>
            <Handle $side="bottom" aria-label="Guide inférieur">
              <Icon w={56} h={4} c="#f2a766"><path d="M2 1h52" strokeDasharray="10 4" strokeLinecap="butt" /></Icon>
            </Handle>
          </Canvas>

          <StatusBar>
            <ViewNav>
              <NavButton aria-label="Zoom précédent">
                <Icon w={36} h={36}><path d="M11 9q3-4 9-4 12 1 12 12t-12 12q-5 0-9-4M11 26l-6 6M3 17h17M8 12l-5 5 5 5" /></Icon>
              </NavButton>
              <NavButton aria-label="Zoom suivant">
                <Icon w={36} h={36} c={faint}><path d="M25 9q-3-4-9-4Q4 6 4 17t12 12q5 0 9-4M25 26l6 6M33 17H16M28 12l5 5-5 5" /></Icon>
              </NavButton>
              <NavButton aria-label="Zoom avant">
                <Icon w={36} h={36}><circle cx="17" cy="16" r="12" /><path d="M25 25l7 7M12 16h10M17 11v10" /></Icon>
              </NavButton>
            </ViewNav>
            {status.map((s) => (
              <StatusCell key={s.label} aria-label={`${s.label} ${s.text}`}>
                {s.art}
                <StatusText>{s.text}</StatusText>
                <Right />
              </StatusCell>
            ))}
          </StatusBar>
        </Work>
      </Body>
      <Base />
    </Shell>
  );
}
